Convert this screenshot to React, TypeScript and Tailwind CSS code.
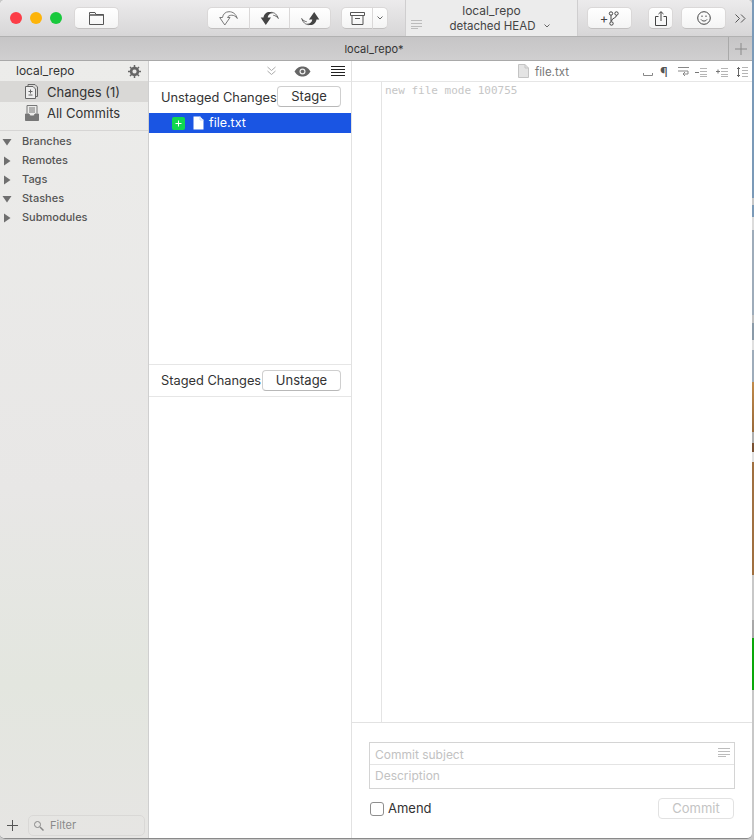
import React from "react";

const FONT = "font-['Inter','Liberation_Sans',sans-serif]";

function ToolButton({ className, children }: { className: string; children: React.ReactNode }) {
  return (
    <div className={`flex items-center justify-center bg-gradient-to-b from-white to-[#f4f4f4] border border-[#dad8d8] border-b-[#c2c0c0] ${className}`}>
      {children}
    </div>
  );
}

// discard: outlined curved arrow, head pointing down on the left
function UndoOutline() {
  return (
    <svg width="19" height="15" viewBox="0 0 19 15" fill="none" stroke="#7a7a7a" strokeWidth="1">
      <path d="M.7 6.500H3.500C4 3 6.500 .7 10 .7c4 0 7 2.300 8.300 6.800-1.500-2.200-3.500-3.300-5.500-3.300-2.300 0-3.800 1-4.300 2.300H11L5.800 14z" />
    </svg>
  );
}

// stash/revert: solid curved arrow with an outlined tail
function UndoSolid() {
  return (
    <svg width="19" height="15" viewBox="0 0 19 15" fill="none">
      <path d="M.7 6.500H3.500C4 3 6.500 1 9.500 1c1.800 0 3 .5 4 1.300-3.300-.5-5.500 1.500-5.800 4.200H11L5.800 14z" fill="#444" />
      <path d="M11 1.300c3.500 0 6 2.200 7.300 6.200-1.200-1.800-3-3-5-3.200" stroke="#666" />
    </svg>
  );
}

function RedoSolid() {
  return (
    <svg width="19" height="15" viewBox="0 0 19 15" fill="none">
      <path d="M18.300 8.500H15.500C15 12 12.500 14 9.500 14c-1.800 0-3-.5-4-1.300 3.300.5 5.500-1.500 5.800-4.200H8L13.200 1z" fill="#444" />
      <path d="M8 13.700C4.500 13.700 2 11.500.7 7.500c1.200 1.800 3 3 5 3.200" stroke="#666" />
    </svg>
  );
}

function FileIcon({ className, fill = "#fff", stroke = "none" }: { className?: string; fill?: string; stroke?: string }) {
  return (
    <svg className={className} width="11" height="14" viewBox="0 0 11 14">
      <path d="M.5 .5H7L10.500 4V13.500H.5z" fill={fill} stroke={stroke} />
      <path d="M7 .5V4H10.500" fill="none" stroke={stroke === "none" ? "#c9d6f5" : stroke} />
    </svg>
  );
}

function LinesIcon({ color = "#bcbcbc", width = 14 }: { color?: string; width?: number }) {
  return (
    <svg width={width} height="9" viewBox={`0 0 ${width} 9`} stroke={color} strokeWidth="1">
      <path d={`M0 .5H${width}M0 3.500H${width}M0 6.500H${width}`} />
      <path d={`M0 8.500H${width - 4}`} />
    </svg>
  );
}

function Triangle({ open }: { open?: boolean }) {
  return open ? (
    <svg width="10" height="8" viewBox="0 0 10 8"><path d="M.5 1H9.500L5 7.500z" fill="#6f6f6f" /></svg>
  ) : (
    <svg width="8" height="10" viewBox="0 0 8 10"><path d="M1 0.500V9.500L7.500 5z" fill="#6f6f6f" /></svg>
  );
}

function DiffTools() {
  return (
    <div className="flex items-center">
      <svg width="10" height="8" viewBox="0 0 10 8" fill="none" stroke="#888"><path d="M.5 5V7.500H9.500V5" /></svg>
      <span className="ml-[7px] w-[8px] text-center text-[13px] leading-[10px] text-[#555]">¶</span>
      <svg className="ml-[10px]" width="11" height="10" viewBox="0 0 11 10" fill="none" stroke="#888"><path d="M0 .5H11M0 4H10V7H5M7 5L5 7l2 2" /></svg>
      <svg className="ml-[6px]" width="12" height="9" viewBox="0 0 12 9" stroke="#b5b5b5"><path d="M5 .5H12M5 3.500H12M5 6.500H12M5 8.500H12" /><path d="M0 4.500H4" stroke="#777" /></svg>
      <svg className="ml-[9px]" width="12" height="9" viewBox="0 0 12 9" stroke="#b5b5b5"><path d="M5 .5H12M5 3.500H12M5 6.500H12M5 8.500H12" /><path d="M0 3.500H4M2 1.500V5.500" stroke="#777" /></svg>
      <svg className="ml-[8px]" width="12" height="10" viewBox="0 0 12 10" stroke="#b5b5b5"><path d="M6 .5H12M6 3.500H12M6 6.500H12M6 9.500H12" /><path d="M2.500 0V10M1 2L2.500 .5 4 2M1 8L2.500 9.500 4 8" fill="none" stroke="#666" /></svg>
    </div>
  );
}

export default function App() {
  return (
    <div className={`${FONT} flex h-[840px] w-[754px] overflow-hidden bg-[#c8c8c8] text-[#2b2b2b]`}>
      <div className="flex h-[839px] w-[752px] flex-col overflow-hidden rounded-t-[5px] rounded-b-[5px] border-b border-[#8a8a8a] bg-white">
        {/* toolbar */}
        <div className="flex h-[37px] shrink-0 items-center border-b border-[#b1b1b1] bg-gradient-to-b from-[#ecebec] to-[#d7d6d7]">
          <div className="ml-[10px] flex gap-[8px]">
            <div className="h-[12px] w-[12px] rounded-full bg-[#fc3d47]" />
            <div className="h-[12px] w-[12px] rounded-full bg-[#fdb40a]" />
            <div className="h-[12px] w-[12px] rounded-full bg-[#19c93d]" />
          </div>
          <ToolButton className="ml-[12px] h-[22px] w-[45px] rounded-[5px]">
            <svg width="15" height="13" viewBox="0 0 15 13" fill="none" stroke="#555"><path d="M.5 2.500V.5H6L7 2.500H14.500V12.500H.5z" /><path d="M.5 3H14.500" strokeWidth="1.500" /></svg>
          </ToolButton>
          <div className="ml-[88px] flex">
            <ToolButton className="h-[22px] w-[43px] rounded-l-[5px]"><UndoOutline /></ToolButton>
            <ToolButton className="h-[22px] w-[40px] border-l-0"><UndoSolid /></ToolButton>
            <ToolButton className="h-[22px] w-[41px] rounded-r-[5px] border-l-0"><RedoSolid /></ToolButton>
          </div>
          <div className="ml-[10px] flex">
            <ToolButton className="h-[22px] w-[32px] rounded-l-[5px]">
              <svg width="15" height="13" viewBox="0 0 15 13" fill="none" stroke="#555"><path d="M.5 .5H14.500V3.500H.5zM2 3.500V12.500H13V3.500M5 6.500H10" /></svg>
            </ToolButton>
            <ToolButton className="h-[22px] w-[15px] rounded-r-[5px] border-l-0">
              <svg width="6" height="4" viewBox="0 0 6 4" fill="none" stroke="#666"><path d="M.5 .5L3 3 5.500 .5" /></svg>
            </ToolButton>
          </div>
          <div className="relative ml-[17px] flex h-[36px] w-[173px] flex-col items-center border-x border-[#cfcecf] bg-[#ececec] text-[#444]">
            <div className="mt-[3px] text-[12px] leading-[16px]">local_repo</div>
            <div className="flex items-center gap-[8px] pl-[16px] text-[11.5px] leading-[14px]">
              detached HEAD
              <svg width="6" height="4" viewBox="0 0 6 4" fill="none" stroke="#666"><path d="M.5 .5L3 3 5.500 .5" /></svg>
            </div>
            <div className="absolute left-[5px] top-[20px]"><LinesIcon width={11} /></div>
          </div>
          <ToolButton className="ml-[9px] h-[22px] w-[45px] rounded-[5px]">
            <span className="text-[13px] leading-none text-[#444]">+</span>
            <svg width="11" height="15" viewBox="0 0 11 15" fill="none" stroke="#444"><circle cx="3" cy="2.500" r="1.700" /><circle cx="8.500" cy="2.500" r="1.700" /><circle cx="3.500" cy="12.500" r="1.700" /><path d="M3 4.200V10.800M8.500 4.200C8.500 7.500 4 6.500 3.500 10" /></svg>
          </ToolButton>
          <ToolButton className="ml-[16px] h-[22px] w-[25px] rounded-[5px]">
            <svg width="12" height="15" viewBox="0 0 12 15" fill="none" stroke="#444"><path d="M3.500 5.500H.5V14.500H11.500V5.500H8.500M6 10V.8M3.500 3L6 .7 8.500 3" /></svg>
          </ToolButton>
          <ToolButton className="ml-[8px] h-[22px] w-[45px] rounded-[5px]">
            <svg width="14" height="14" viewBox="0 0 14 14" fill="none" stroke="#444"><circle cx="7" cy="7" r="6.300" /><path d="M4 8.500c1.500 2 4.500 2 6 0" /><path d="M5 4.500V6M9 4.500V6" /></svg>
          </ToolButton>
          <svg className="ml-[9px]" width="11" height="9" viewBox="0 0 11 9" fill="none" stroke="#555"><path d="M.5 .5L4.500 4.500 .5 8.500M6 .5L10 4.500 6 8.500" /></svg>
        </div>

        {/* tab bar */}
        <div className="flex h-[24px] shrink-0 border-b border-[#a9a9a9] bg-gradient-to-b from-[#c6c5c6] to-[#d0cfd0]">
          <div className="flex-1 pl-[20px] text-center text-[11px] leading-[25px] text-[#333]">local_repo*</div>
          <div className="flex w-[24px] items-center justify-center border-l border-[#a9a9a9]">
            <svg width="12" height="12" viewBox="0 0 12 12" stroke="#8a8a8a"><path d="M6 0V12M0 6H12" /></svg>
          </div>
        </div>

        <div className="flex min-h-0 flex-1">
          {/* sidebar */}
          <div className="flex w-[149px] shrink-0 flex-col border-r border-[#cfcfcf] bg-[linear-gradient(180deg,#ececea_0%,#e8e7e6_55%,#e3e6df_80%,#e6e5e3_100%)]">
            <div className="flex h-[20px] items-center justify-between pl-[16px] pr-[7px] text-[12px] text-[#333]">
              local_repo
              <svg width="13" height="13" viewBox="0 0 13 13"><circle cx="6.500" cy="6.500" r="3.500" fill="none" stroke="#666" strokeWidth="2.500" /><path d="M6.500 0V13M0 6.500H13M2 2L11 11M11 2L2 11" stroke="#666" strokeWidth="1.500" /><circle cx="6.500" cy="6.500" r="2" fill="#e9e8e7" /></svg>
            </div>
            <div className="flex h-[21px] items-center bg-[#d9d8d6] text-[13px] text-[#333]">
              <svg className="ml-[25px]" width="13" height="15" viewBox="0 0 13 15" fill="none" stroke="#666"><path d="M3 2.500V.5H10L12.500 3V12.500H11" /><path d="M.5 2.500H8L10.500 5V14.500H.5z" fill="#eee" /><path d="M3.500 7.500H7.500M5.500 5.500V9.500M3.500 11H7.500" /></svg>
              <span className="ml-[9px] pt-[2px]">Changes (1)</span>
            </div>
            <div className="flex h-[21px] items-center text-[13px] text-[#333]">
              <svg className="ml-[25px]" width="14" height="16" viewBox="0 0 14 16" fill="none" stroke="#777"><path d="M2 8.500V.5H12V8.500M4 3H10M4 5H10M4 7H10" /><path d="M.5 9H4L5 11H9L10 9H13.500V15.500H.5z" fill="#777" /></svg>
              <span className="ml-[8px] pt-[2px]">All Commits</span>
            </div>
            <div className="mt-[7px] border-t border-[#d6d5d4] pt-[1px]">
              {[
                { label: "Branches", open: true },
                { label: "Remotes" },
                { label: "Tags" },
                { label: "Stashes", open: true },
                { label: "Submodules" },
              ].map((s) => (
                <div key={s.label} className="flex h-[19px] items-center text-[11px] font-medium text-[#555]">
                  <span className="flex w-[22px] justify-center pr-[8px]"><Triangle open={s.open} /></span>
                  {s.label}
                </div>
              ))}
            </div>
            <div className="mt-auto mb-[2px] flex items-center">
              <svg className="ml-[7px]" width="11" height="11" viewBox="0 0 11 11" stroke="#555"><path d="M5.500 0V11M0 5.500H11" /></svg>
              <div className="ml-[10px] flex h-[21px] w-[117px] items-center rounded-[5px] border border-[#d9d8d6] text-[11px] text-[#8a8a8a]">
                <svg className="ml-[4px]" width="11" height="11" viewBox="0 0 11 11" fill="none" stroke="#888"><circle cx="4.500" cy="4.500" r="3" /><path d="M7 7L10.500 10.500" strokeWidth="1.500" /></svg>
                <span className="ml-[6px]">Filter</span>
              </div>
            </div>
          </div>

          {/* file lists */}
          <div className="flex w-[203px] shrink-0 flex-col border-r border-[#e2e2e2]">
            <div className="flex h-[21px] shrink-0 items-center justify-end border-b border-[#e6e6e6]">
              <svg width="9" height="10" viewBox="0 0 9 10" fill="none" stroke="#aaa"><path d="M.5 1L4.500 4.500 8.500 1M.5 5L4.500 8.500 8.500 5" /></svg>
              <svg className="ml-[18px]" width="17" height="11" viewBox="0 0 17 11"><path d="M.5 5.500C3 1.500 5.500 .5 8.500 .5S14 1.500 16.500 5.500C14 9.500 11.500 10.500 8.500 10.500S3 9.500 .5 5.500z" fill="#666" /><circle cx="8.500" cy="5.500" r="3" fill="#eee" /><circle cx="8.500" cy="5.500" r="1.800" fill="#666" /></svg>
              <svg className="ml-[20px] mr-[6px]" width="14" height="10" viewBox="0 0 14 10" stroke="#222"><path d="M0 .5H14M0 3.500H14M0 6.500H14M0 9.500H14" /></svg>
            </div>
            <div className="flex h-[31px] shrink-0 items-center pl-[12px] text-[13px] text-[#333]">
              <span className="w-[116px] whitespace-nowrap text-[12.8px]">Unstaged Changes</span>
              <div className="mb-[2px] flex h-[21px] w-[64px] items-center justify-center rounded-[4px] border border-[#cfcfcf] border-b-[#b8b8b8] bg-white">Stage</div>
            </div>
            <div className="flex h-[20px] shrink-0 items-center bg-[#1a55e3] text-[12.5px] text-white">
              <div className="ml-[23px] flex h-[13px] w-[13px] items-center justify-center rounded-[2px] bg-[#10d84f]">
                <svg width="7" height="7" viewBox="0 0 7 7" stroke="#fff"><path d="M3.500 .5V6.500M.5 3.500H6.500" /></svg>
              </div>
              <FileIcon className="ml-[8px]" />
              <span className="ml-[5px]">file.txt</span>
            </div>
            <div className="flex-1" />
            <div className="flex h-[33px] shrink-0 items-center border-y border-[#e6e6e6] pl-[12px] text-[13px] text-[#333]">
              <span className="w-[101px] whitespace-nowrap pt-[1px] text-[12.8px]">Staged Changes</span>
              <div className="flex h-[21px] w-[79px] items-center justify-center rounded-[4px] border border-[#cfcfcf] border-b-[#b8b8b8] bg-white">Unstage</div>
            </div>
            <div className="h-[441px] shrink-0" />
          </div>

          {/* diff */}
          <div className="flex min-w-0 flex-1 flex-col">
            <div className="relative flex h-[21px] shrink-0 items-center justify-center border-b border-[#e6e6e6] pr-[17px] text-[11.5px] text-[#777]">
              <FileIcon className="mr-[6px]" fill="#e4e4e4" stroke="#c4c4c4" />
              <span className="pt-[3px]">file.txt</span>
              <div className="absolute right-[4px] top-[6px]"><DiffTools /></div>
            </div>
            <div className="flex min-h-0 flex-1">
              <div className="w-[30px] shrink-0 border-r border-[#e4e4e4]" />
              <div className="pl-[3px] pt-[1px] font-['DejaVu_Sans_Mono',monospace] text-[11px] leading-[15px] text-[#c6c6c6]">new file mode 100755</div>
            </div>
            <div className="flex h-[116px] shrink-0 flex-col border-t border-[#e2e2e2] pl-[17px] pr-[17px] pt-[19px]">
              <div className="flex h-[47px] w-[366px] flex-col border border-[#d4d4d4] text-[12px] text-[#c2c2c2]">
                <div className="relative flex h-[22px] items-center border-b border-[#e4e4e4] pl-[5px] pt-[2px]">
                  Commit subject
                  <div className="absolute right-[4px] top-[5px]"><LinesIcon width={12} /></div>
                </div>
                <div className="flex flex-1 items-center pb-[2px] pl-[5px]">Description</div>
              </div>
              <div className="mt-[9px] flex items-center">
                <div className="ml-[1px] h-[14px] w-[14px] rounded-[3px] border border-[#8e8e8e] bg-white" />
                <span className="ml-[4px] text-[13px] text-[#333]">Amend</span>
                <div className="ml-auto mr-[1px] flex h-[21px] w-[76px] items-center justify-center rounded-[4px] border border-[#e2e2e2] text-[13px] text-[#c4c4c4]">Commit</div>
              </div>
            </div>
          </div>
        </div>
      </div>

      {/* desktop showing through to the right of the window */}
      <div className="flex w-[2px] shrink-0 flex-col">
        <div className="h-[198px] bg-[#7b9ab8]" />
        <div className="h-[7px] bg-[#c8c8c8]" />
        <div className="h-[12px] bg-[#7b9ab8]" />
        <div className="h-[13px] bg-[#dcdcdc]" />
        <div className="h-[85px] bg-[#9eacba]" />
        <div className="h-[8px] bg-[#c0c0c0]" />
        <div className="h-[17px] bg-[#8a9aa8]" />
        <div className="h-[10px] bg-[#e0e0e0]" />
        <div className="h-[32px] bg-[#9eacba]" />
        <div className="h-[50px] bg-gradient-to-b from-[#c08a4a] to-[#9a6a3a]" />
        <div className="h-[11px] bg-[#b0b0b0]" />
        <div className="h-[9px] bg-[#7a5030]" />
        <div className="h-[10px] bg-[#e0e0e0]" />
        <div className="h-[113px] bg-[#a07040]" />
        <div className="h-[45px] bg-[#c8c8c8]" />
        <div className="h-[18px] bg-[#a8a8a8]" />
        <div className="h-[52px] bg-[#0aa80a]" />
        <div className="h-[150px] bg-[#c8c8c8]" />
      </div>
    </div>
  );
}
